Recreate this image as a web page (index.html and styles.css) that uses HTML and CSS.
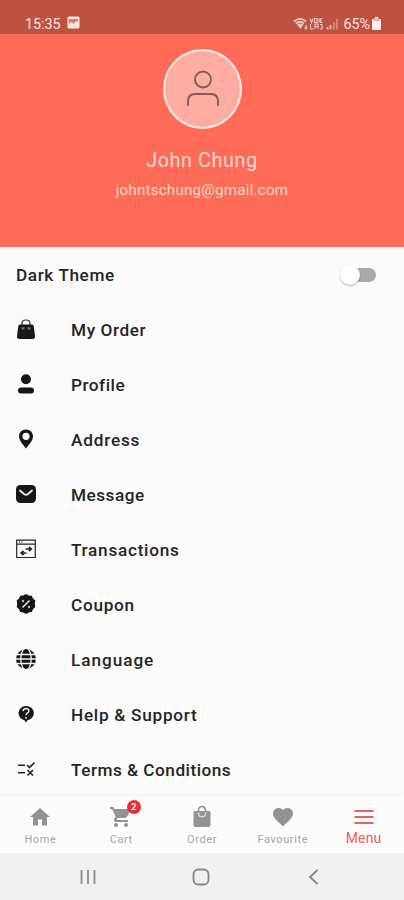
FILE: index.html
```html
<!DOCTYPE html>
<html lang="en">
<head>
<meta charset="utf-8">
<title>Menu</title>
<link rel="stylesheet" href="styles.css">
</head>
<body>
<div class="phone">
  <header class="status">
    <div class="status-left"><span>15:35</span>
      <svg width="13" height="13" viewBox="0 0 13 13"><rect x=".5" y=".5" width="12" height="12" rx="1.500" fill="#ffe4dd"/><path d="M2 8 4.500 6 6.500 8 9.500 5 11 6.200V3H2Z" fill="#cf8173"/></svg>
    </div>
    <div class="status-right">
      <svg width="46" height="14" viewBox="0 0 46 14" fill="none" stroke="#f3c3b8"><path d="M.8 4.500Q7-.8 13.200 4.500M2.800 6.500Q7 3 11.200 6.500" stroke-width="1.800"/><path d="m4 7.500 3.500 4.500 3-4.500Q7 5.500 4 7.500Z" fill="#f3c3b8" stroke="none"/><path d="M13 8v4m-1.500-1.500L13 12l1.500-1.500" stroke-width="1.200"/><path d="M17 1.500 18.500 5.500 20 1.500M21.500 1.500h2.500v4h-2.500zM26 1.500v4M29.500 1.500H27.500v4h2M17.500 7v5h3M22 12V7h3v5M22 9.500h3M27 7.500h2V12h-2" stroke-width="1.200"/><path d="M34.500 10v2.500M37.500 8v4.500" stroke-width="1.800"/><path d="M41 5v7.500M44 2v10.500" stroke="#d98778" stroke-width="1.800"/></svg>
      <span>65%</span>
      <svg width="9" height="13" viewBox="0 0 9 13"><path d="M2.800 0h3.400v2H8q1 0 1 1v9q0 1-1 1H1q-1 0-1-1V3q0-1 1-1h1.800Z" fill="#fff0eb"/><path d="M2 1.500h5V4H2z" fill="#e7aaa0"/></svg>
    </div>
  </header>

  <section class="profile">
    <div class="avatar">
      <svg width="34" height="38" viewBox="0 0 34 38" fill="none" stroke="#775f5b" stroke-width="1.900" stroke-linecap="round"><circle cx="17" cy="9.500" r="8"/><path d="M2 35v-3.500q0-7.500 7-7.500h16q7 0 7 7.500V35"/></svg>
    </div>
    <div class="name">John Chung</div>
    <div class="email">johntschung@gmail.com</div>
  </section>

  <main class="menu">
    <div class="row theme"><span class="t-theme">Dark Theme</span><div class="switch"><div class="knob"></div></div></div>
    <div class="row"><svg class="icon" viewBox="0 0 20 20"><path d="M6 7V4.500Q6 1 10 1t4 3.500V7" fill="none" stroke="#333" stroke-width="1.200"/><path d="M4 5.500h12q1.500 0 1.700 1.500L19 17q.3 3-2.500 3h-13q-2.800 0-2.500-3L2.300 7Q2.500 5.500 4 5.500Z" fill="#18181a"/><path d="M5.500 8.200h3v2.300h-3zM11.500 8.200h3v2.300h-3z" fill="#77777a"/></svg><span class="t-order">My Order</span></div>
    <div class="row"><svg class="icon" viewBox="0 0 20 20" fill="#161618"><circle cx="10" cy="5.300" r="5"/><rect x="2" y="13.500" width="16" height="6" rx="3"/></svg><span class="t-profile">Profile</span></div>
    <div class="row"><svg class="icon" viewBox="0 0 20 20"><path fill="#161618" fill-rule="evenodd" d="M10 .5c-4.200 0-7 3-7 6.800 0 4.500 4.500 9 7 12.200 2.500-3.200 7-7.700 7-12.200C17 3.500 14.200.5 10 .5Zm0 3.200a3.600 3.600 0 1 1 0 7.200 3.600 3.600 0 0 1 0-7.200Z"/></svg><span class="t-address">Address</span></div>
    <div class="row"><svg class="icon" viewBox="0 0 20 20"><rect y="1" width="20" height="18" rx="4.500" fill="#161618"/><path d="m4 6.500 4 3.500q2 1.500 4 0l4-3.500" fill="none" stroke="#eee" stroke-width="1.800" stroke-linecap="round"/></svg><span class="t-message">Message</span></div>
    <div class="row"><svg class="icon" viewBox="0 0 20 20" fill="none" stroke="#242426" stroke-width="1.200"><path d="M.7 1.200h18.600v17.300H.7ZM.7 5.200h18.600M3 3.200h1M5.500 3.200h1"/><path d="M9.500 10H15M13 7.800 15.300 10 13 12.200M10.500 14H5.500M7.500 11.800 5.200 14l2.300 2.200" stroke-width="1.700"/></svg><span class="t-trans">Transactions</span></div>
    <div class="row"><svg class="icon" viewBox="0 0 20 20"><path d="m10 0 2.700 1.600 3.100.2 1.200 2.800 2.300 2-.5 3.400.5 3-2.300 2.200-1.200 2.900-3.100.3L10 20l-2.700-1.600-3.100-.3L3 15.200.7 13l.5-3-.5-3.400L3 4.600l1.200-2.800 3.100-.2Z" fill="#161618"/><path d="m6.500 13.500 7-7" stroke="#eee" stroke-width="1.500"/><circle cx="7" cy="7" r="1.200" fill="#bbb"/><circle cx="13" cy="13" r="1.200" fill="#bbb"/></svg><span class="t-coupon">Coupon</span></div>
    <div class="row"><svg class="icon" viewBox="0 0 20 20"><circle cx="10" cy="10" r="10" fill="#161618"/><g fill="none" stroke="#f5f5f5" stroke-width="1.300"><ellipse cx="10" cy="10" rx="5.200" ry="11"/><path d="M1 5.500h18M0 10h20M1 14.500h18"/></g></svg><span class="t-lang">Language</span></div>
    <div class="row"><svg class="icon" viewBox="0 0 20 20"><path d="M9.700 2a7.200 7.200 0 1 1 1.800 14.300L10 18.500l-1.500-2.200A7.200 7.200 0 0 1 9.700 2Z" fill="#161618"/><path d="M7 7q.5-2.500 3.200-2.500Q13 4.700 12.800 7q0 1.200-1.500 2.200-1.200.7-1.200 2M10 13v1.800" fill="none" stroke="#eee" stroke-width="1.500"/></svg><span class="t-help">Help &amp; Support</span></div>
    <div class="row"><svg class="icon" viewBox="0 0 20 20" fill="none" stroke="#242426" stroke-width="1.600"><path d="M2 6.200h7M2 13.700h7M11 6l2.500 2.500L18.500 3.500M11.500 11l5.500 5.500M17 11l-5.500 5.500"/></svg><span class="t-terms">Terms &amp; Conditions</span></div>
  </main>

  <nav class="tabs">
    <div class="tab"><svg width="24" height="24" viewBox="0 0 24 24" fill="#909497"><path d="M10 20.500v-6h4v6h5v-8.500h3L12 3 2 12h3v8.500z"/></svg><span>Home</span></div>
    <div class="tab cart"><svg width="24" height="24" viewBox="0 0 24 24" fill="#909497"><path d="M7 18c-1.100 0-2 .9-2 2s.9 2 2 2 2-.9 2-2-.9-2-2-2zM1 2v2h2l3.600 7.600-1.400 2.400C4.500 15.400 5.500 17 7 17h12v-2H7.400l1.200-2h7.400c.8 0 1.400-.4 1.800-1L21.400 5.500C21.800 4.800 21.300 4 20.500 4H5.200L4.300 2zM17 18c-1.100 0-2 .9-2 2s.9 2 2 2 2-.9 2-2-.9-2-2-2z"/></svg><b class="badge">2</b><span>Cart</span></div>
    <div class="tab"><svg width="24" height="24" viewBox="0 0 24 24"><path d="M8.500 7V5a3.500 3.500 0 0 1 7 0v2" fill="none" stroke="#909497" stroke-width="1.700"/><path d="M5 6h14q1.500 0 1.500 1.500V20q0 2-2 2h-13q-2 0-2-2V7.500Q3.500 6 5 6Z" fill="#909497"/><path d="M8.500 7.500v1.500Q9 12 12 12t3.500-3V7.500" fill="none" stroke="#ddd" stroke-width="1.300"/></svg><span>Order</span></div>
    <div class="tab"><svg width="24" height="24" viewBox="0 0 24 24" fill="#909497"><path d="m12 21.300-1.500-1.300C5.400 15.400 2 12.300 2 8.500 2 5.400 4.400 3 7.500 3c1.700 0 3.400.8 4.500 2.100C13.100 3.800 14.800 3 16.500 3 19.600 3 22 5.400 22 8.500c0 3.800-3.400 6.900-8.500 11.500z"/></svg><span class="t-fav">Favourite</span></div>
    <div class="tab active"><svg width="24" height="24" viewBox="0 0 24 24" fill="#e96257"><path d="M2.500 5h19v2h-19zM2.500 11h19v2h-19zM2.500 17h19v2h-19z"/></svg><span>Menu</span></div>
  </nav>

  <footer class="system">
    <svg width="20" height="20" viewBox="0 0 20 20" fill="none" stroke="#87878a" stroke-width="1.700"><path d="M3.500 3v14M10 3v14M16.500 3v14"/></svg>
    <svg width="20" height="20" viewBox="0 0 20 20" fill="none" stroke="#858588" stroke-width="1.800"><rect x="2.500" y="2.500" width="15" height="15" rx="4.800"/></svg>
    <svg width="20" height="20" viewBox="0 0 20 20" fill="none" stroke="#858588" stroke-width="1.800"><path d="m13.500 3-7.500 7 7.500 7"/></svg>
  </footer>
</div>
</body>
</html>
```
FILE: styles.css
```css
* { box-sizing: border-box; }
body { margin: 0; font-family: Roboto, "Liberation Sans", sans-serif; }
.phone { width: 404px; height: 900px; display: flex; flex-direction: column; overflow: hidden; background: #fbfbfb; }

.status { flex: none; height: 34px; padding: 14px 23px 0 25px; display: flex; justify-content: space-between; background: #bd5142; color: #ffe4dd; font-size: 14.300px; line-height: 20px; }
.status-left { display: flex; align-items: center; gap: 6px; height: 19px; }
.status-left svg { margin-top: -2px; }
.status-right { display: flex; align-items: center; gap: 4px; height: 19px; }
.status-right svg:last-child { margin-left: -2px; }

.profile { flex: none; height: 213px; padding-top: 15px; display: flex; flex-direction: column; align-items: center; background: #ff6b59; color: #ffd8cf; }
.avatar { width: 79px; height: 80px; margin-left: 1px; border: 2px solid #ffe9e3; border-radius: 50%; background: #ffada3; display: flex; align-items: center; justify-content: center; }
.name { margin-top: 19px; font-size: 19.800px; line-height: 26px; letter-spacing: .6px; }
.email { margin-top: 5px; font-size: 15.200px; line-height: 22px; letter-spacing: .2px; }

.menu { flex: none; height: 549px; overflow: hidden; }
.row { height: 55.100px; padding: 0 28px 0 16px; display: flex; align-items: center; font-size: 17.200px; font-weight: 500; letter-spacing: .5px; color: #242426; white-space: nowrap; }
.theme { justify-content: space-between; }
.t-theme, .t-order { letter-spacing: .6px; }
.t-address { letter-spacing: .8px; }
.t-trans, .t-coupon, .t-help { letter-spacing: .73px; }
.t-lang { letter-spacing: .95px; }
.icon { width: 20px; height: 20px; margin: -2px 35px 0 0; flex: none; }
.switch { width: 33px; height: 14px; border-radius: 7px; background: #a9a9a9; position: relative; }
.knob { position: absolute; left: -3px; top: -3px; width: 20px; height: 20px; border-radius: 50%; background: #fff; box-shadow: 0 1px 2px rgba(0,0,0,.28); }

.tabs { flex: none; height: 57px; display: grid; grid-template-columns: repeat(5, 1fr); background: #fcfcfc; box-shadow: 0 -1px 3px rgba(0,0,0,.03); }
.tab { position: relative; display: flex; flex-direction: column; align-items: center; padding-top: 9px; font-size: 11px; line-height: 14px; letter-spacing: .6px; color: #a5a7a9; }
.tab span { margin-top: 4px; }
.active { color: #e96257; font-size: 14px; letter-spacing: .2px; }
.active span { margin-top: 2px; }
.badge { position: absolute; left: 46px; top: 4px; width: 14px; height: 14px; border-radius: 50%; background: #ec3030; color: #fff; font-size: 9px; line-height: 14px; letter-spacing: 0; text-align: center; }

.system { flex: 1; padding: 1px 80px 0 78px; display: flex; justify-content: space-between; align-items: center; background: #f1f1f1; }
```
